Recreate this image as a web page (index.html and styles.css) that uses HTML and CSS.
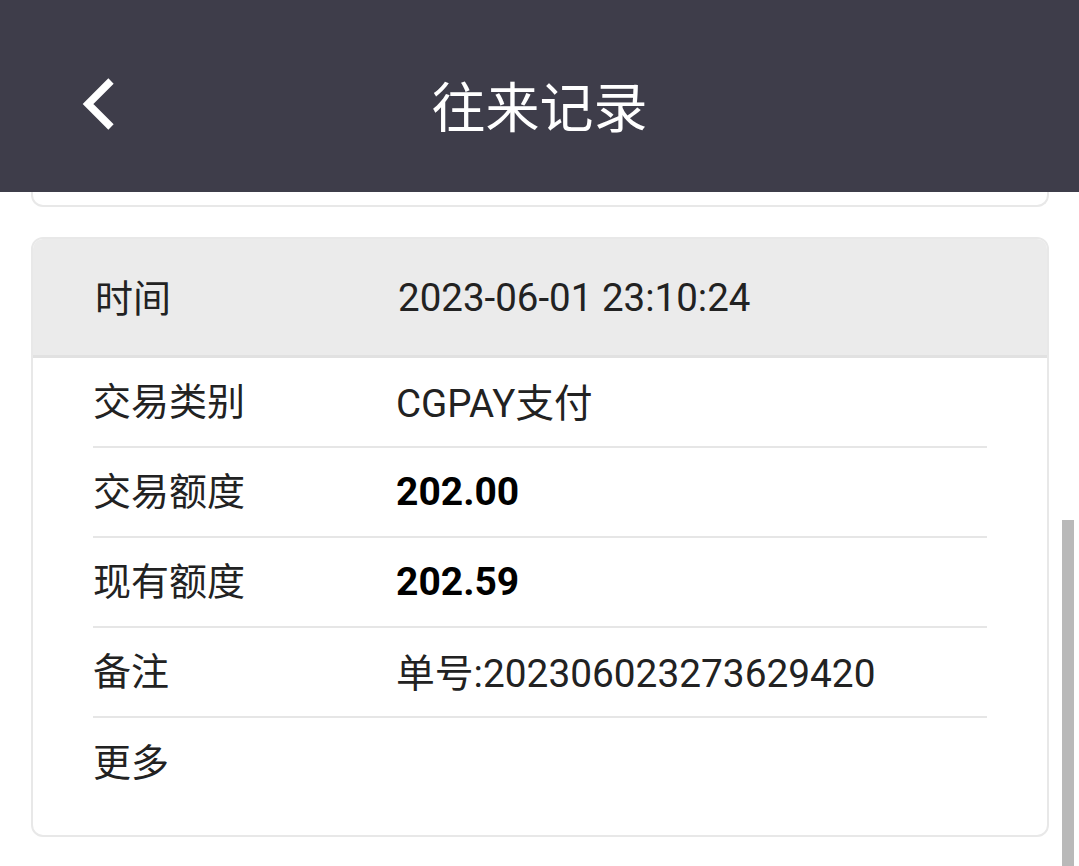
FILE: index.html
```html
<!DOCTYPE html>
<html lang="zh-CN">
<head>
  <meta charset="UTF-8">
  <meta name="viewport" content="width=device-width, initial-scale=1.0">
  <title>往来记录</title>
  <link rel="stylesheet" href="styles.css">
</head>
<body>
  <header class="top-bar">
    <a class="back-btn" href="#">
      <svg width="40" height="60" viewBox="0 0 40 60">
        <polyline points="32,4 9,27 32,50" fill="none" stroke="#ffffff" stroke-width="7.5" stroke-linecap="butt" stroke-linejoin="miter"/>
      </svg>
    </a>
    <h1 class="top-title">往来记录</h1>
  </header>

  <div class="record-list">
    <!-- previous record, scrolled under the bar -->
    <div class="record-card prev-card"></div>

    <div class="record-card">
      <div class="card-head">
        <span class="label">时间</span>
        <span class="value date">2023-06-01 23:10:24</span>
      </div>
      <div class="card-row">
        <span class="label">交易类别</span>
        <span class="value">CGPAY支付</span>
      </div>
      <div class="card-row">
        <span class="label">交易额度</span>
        <span class="value strong">202.00</span>
      </div>
      <div class="card-row">
        <span class="label">现有额度</span>
        <span class="value strong">202.59</span>
      </div>
      <div class="card-row">
        <span class="label">备注</span>
        <span class="value remark">单号:202306023273629420</span>
      </div>
      <div class="card-row last">
        <span class="label">更多</span>
      </div>
    </div>
  </div>

  <div class="scroll-thumb"></div>
</body>
</html>
```

FILE: styles.css
```css
* {
  margin: 0;
  padding: 0;
  box-sizing: border-box;
}

body {
  font-family: Roboto, "Noto Sans CJK SC", sans-serif;
  background: #ffffff;
  color: #222222;
  overflow: hidden;
}

.top-bar {
  height: 192px;
  background: #3e3d4a;
  display: flex;
  align-items: center;
  justify-content: center;
  position: relative;
}

.back-btn {
  position: absolute;
  left: 79px;
  top: 77px;
  display: block;
  width: 40px;
  height: 60px;
}

.top-title {
  color: #ffffff;
  font-size: 54px;
  font-weight: normal;
  font-family: "Noto Sans CJK SC", sans-serif;
  margin-top: 16px;
}

.record-list {
  padding: 0 30px 0 31px;
}

.record-card {
  border: 2px solid #e8e8e8;
  border-radius: 12px;
  overflow: hidden;
  background: #ffffff;
}

.prev-card {
  height: 15px;
  border-top: none;
  border-top-left-radius: 0;
  border-top-right-radius: 0;
  margin-bottom: 30px;
}

.card-head {
  height: 119px;
  background: #ebebeb;
  border-bottom: 3px solid #e1e1e1;
  display: flex;
  align-items: center;
  padding-left: 62px;
}

.card-row {
  height: 90px;
  margin: 0 60px;
  border-bottom: 2px solid #e6e6e6;
  display: flex;
  align-items: center;
}

.card-row.last {
  border-bottom: none;
  height: 117px;
  align-items: flex-start;
  padding-top: 14px;
}

.label {
  width: 303px;
  flex-shrink: 0;
  font-size: 38px;
  padding-bottom: 8px;
  font-family: "Noto Sans CJK SC", sans-serif;
}

.card-head .label {
  padding-bottom: 4px;
}

.value {
  font-size: 38.5px;
  padding-bottom: 4px;
}

.value.date {
  padding-bottom: 0;
}

.value.remark {
  font-size: 38.8px;
}

.value.strong {
  font-size: 39px;
  font-weight: bold;
  color: #000000;
  padding-bottom: 0;
}

.scroll-thumb {
  position: fixed;
  right: 5px;
  top: 520px;
  width: 12px;
  height: 346px;
  background: #b9b9b9;
}
```
